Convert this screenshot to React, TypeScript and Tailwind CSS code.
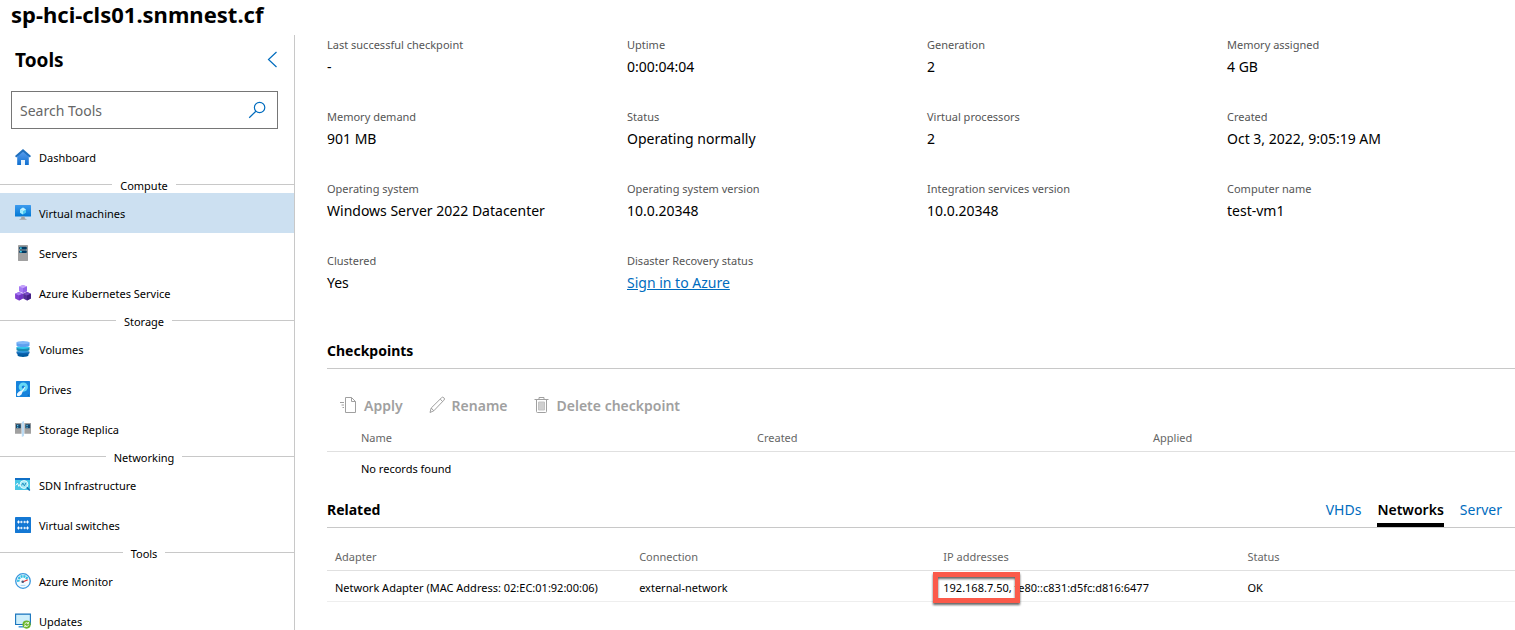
import type { ReactNode } from "react";

const icons: Record<string, ReactNode> = {
  dashboard: (
    <>
      <defs>
        <linearGradient id="home" x1="0" y1="0" x2="0" y2="1">
          <stop offset="0" stopColor="#5ea0ef" />
          <stop offset="1" stopColor="#0f6fd0" />
        </linearGradient>
      </defs>
      <path d="M2.2 6.5 8 1.5l5.8 5V16H9.900v-5H6.100v5H2.200z" fill="url(#home)" />
      <path d="M8 0 0 7l1.200 1.600L8 2.800l6.800 5.800L16 7z" fill="#1f6fbd" />
      <path d="M6.100 11h3.800v5H6.100z" fill="#e8f3fc" />
    </>
  ),
  vm: (
    <>
      <defs>
        <linearGradient id="screen" x1="0" y1="1" x2="0" y2="0">
          <stop offset="0" stopColor="#0078d4" />
          <stop offset="1" stopColor="#3e9bee" />
        </linearGradient>
      </defs>
      <rect y="0" width="16" height="11.6" rx=".5" fill="url(#screen)" />
      <path d="M8 2.600 11 4.400v3.400l-3 1.800-3-1.800V4.400z" fill="#50c8ee" />
      <path d="m8 2.600 3 1.800-3 1.700-3-1.700z" fill="#c3f1ff" />
      <path d="M5 4.400l3 1.700v3.500l-3-1.800z" fill="#9cebff" />
      <path d="M6.400 11.600h3.200l.3 1.800 1.700.8v.6H4.400v-.6l1.700-.8z" fill="#a3a3a3" />
    </>
  ),
  server: (
    <>
      <rect x="3" width="10" height="16" rx=".4" fill="#a0a0a0" />
      <rect x="4.200" y="1.800" width="7.600" height="2.600" rx="1" fill="#003a63" />
      <rect x="4.200" y="5.400" width="7.600" height="2.600" rx="1" fill="#003a63" />
      <circle cx="5.900" cy="3.100" r=".9" fill="#50e6ff" />
      <circle cx="5.900" cy="6.700" r=".9" fill="#50e6ff" />
    </>
  ),
  kubernetes: (
    <>
      <path d="m8 0 4 1.600v4.600L8 8 4 6.200V1.600z" fill="#a67af4" />
      <path d="m8 0 4 1.600L8 3.200 4 1.600z" fill="#c5a3fb" />
      <path d="M8 3.200V8l4-1.800V1.600z" fill="#9463e6" />
      <path d="m4 7 3.900 1.700v4.900L4 15.600.1 13.600V8.700z" fill="#7f3fd0" />
      <path d="m4 7 3.900 1.700L4 10.400.1 8.700z" fill="#a67af4" />
      <path d="M4 10.400v5.200l3.900-2V8.700z" fill="#7236c4" />
      <path d="m12 7 3.900 1.700v4.900l-3.900 2-3.900-2V8.700z" fill="#552f99" />
      <path d="m12 7 3.900 1.700-3.900 1.700-3.900-1.700z" fill="#7a4cc4" />
      <path d="M12 10.400v5.200l3.900-2V8.700z" fill="#421f83" />
    </>
  ),
  volumes: (
    <>
      <path d="M2.500 12.500h11v1.800c0 2.200-11 2.200-11 0z" fill="#005a9e" />
      <path d="M1.500 10.500h13v1.600c0 2-13 2-13 0z" fill="#0f62ae" />
      <path d="M1.500 6.300h13v2.400c0 2.200-13 2.200-13 0z" fill="#198ab3" />
      <ellipse cx="8" cy="6.500" rx="6.500" ry="1.500" fill="#32c8ec" />
      <path d="M1.500 1.600h13v2.800c0 2-13 2-13 0z" fill="#5ea0ef" />
      <ellipse cx="8" cy="1.700" rx="6.500" ry="1.600" fill="#83b9f9" />
      <ellipse cx="8" cy="10.900" rx="6" ry="1" fill="#2b96dc" />
    </>
  ),
  drives: (
    <>
      <rect x="1" width="14" height="16" rx=".5" fill="#1683dc" />
      <circle cx="8.300" cy="6.100" r="4.600" fill="#66d8f5" />
      <circle cx="8.300" cy="6.100" r="1.600" fill="#1683dc" />
      <path d="m2 12.700 2-2.300 3-.9L9.600 5.800l.7.6-2.600 4.200-1.200 2.800-2.400 1.800L2 14.800z" fill="#eef8ff" />
      <circle cx="13.300" cy="14.200" r=".6" fill="#005ba1" />
    </>
  ),
  replica: (
    <>
      <path d="M0 2h6.600v10.800H0zM9.400 2H16v10.800H9.400z" fill="#a0a0a0" />
      <path d="M1 3.200h4.800v4H1zM10.400 3.200h4.800v4h-4.800z" fill="#16466d" />
      <path d="M2 4h1.300v1H2zM2 5.800h1.300v1H2zM11.400 4h1.300v1h-1.300zM11.400 5.800h1.300v1h-1.300z" fill="#5cc7e8" />
      <path d="M6.800 1 9 0v15l-2.200 1z" fill="#bcdcf5" />
    </>
  ),
  sdn: (
    <>
      <path d="M0 1h15v12H0z" fill="#47c7e5" />
      <path d="M0 1h15v2H0z" fill="#0f6fc6" />
      <path d="M.8 8.300 2.500 6.200l1.300 3.200 1-1.900" stroke="#fff" strokeWidth=".9" fill="none" />
      <circle cx="9" cy="7.500" r="3.900" fill="#9be7f4" stroke="#e6fbff" />
      <path d="m6.500 8.400 1.400-2.300 1.500 2.700 1.600-3" stroke="#1683b8" strokeWidth=".9" fill="none" />
      <path d="m11.800 10.200 3 3.300" stroke="#1272b5" strokeWidth="1.6" />
    </>
  ),
  switches: (
    <>
      <rect width="16" height="16" rx=".4" fill="#1478d4" />
      <path d="M3.500 5h3.200M9.300 5h3.200M3.500 11h3.200M9.300 11h3.200" stroke="#fff" strokeWidth="1" />
      <path
        d="M2 5l2-1.900v3.800zM7.800 5 6.200 3.400v3.200zM8.200 5l1.600-1.600v3.200zM14 5l-2-1.900v3.800zM2 11l2-1.900v3.800zM7.800 11 6.200 9.400v3.200zM8.200 11l1.600-1.600v3.200zM14 11l-2-1.900v3.800z"
        fill="#fff"
      />
    </>
  ),
  monitor: (
    <>
      <circle cx="8" cy="8" r="7.300" fill="#f4fbff" stroke="#3a96dd" strokeWidth="1.3" />
      <path
        d="M3.400 8.800A4.700 4.700 0 0 1 12.200 5.800"
        fill="none"
        stroke="#32bfe4"
        strokeWidth="2.6"
        strokeDasharray="2.1 .7"
      />
      <path d="m7.600 9 5.200-2.200" stroke="#e62c2c" strokeWidth="1.2" />
      <circle cx="7.700" cy="8.800" r="1.300" fill="#44597a" />
      <path d="M5.600 12.400h4.800" stroke="#a8d6f5" />
    </>
  ),
  updates: (
    <>
      <path d="M.6 1.100h14.800v10.400H.6z" fill="#cdeefb" stroke="#1673bd" strokeWidth="1.1" />
      <path d="M3.600 14.400h5v-1.100h-5z" fill="#0078d4" />
      <circle cx="11.600" cy="11.600" r="4.100" fill="#6bb52c" />
      <path
        d="M9.600 11.500a2.100 2.100 0 0 1 3.600-1.200M13.600 11.700a2.100 2.100 0 0 1-3.600 1.200M13.500 9v1.600h-1.600M9.700 14.200v-1.600h1.600"
        fill="none"
        stroke="#fff"
        strokeWidth=".8"
      />
    </>
  ),
};

const groups: { title?: string; items: { label: string; icon: string }[] }[] = [
  { items: [{ label: "Dashboard", icon: "dashboard" }] },
  {
    title: "Compute",
    items: [
      { label: "Virtual machines", icon: "vm" },
      { label: "Servers", icon: "server" },
      { label: "Azure Kubernetes Service", icon: "kubernetes" },
    ],
  },
  {
    title: "Storage",
    items: [
      { label: "Volumes", icon: "volumes" },
      { label: "Drives", icon: "drives" },
      { label: "Storage Replica", icon: "replica" },
    ],
  },
  {
    title: "Networking",
    items: [
      { label: "SDN Infrastructure", icon: "sdn" },
      { label: "Virtual switches", icon: "switches" },
    ],
  },
  {
    title: "Tools",
    items: [
      { label: "Azure Monitor", icon: "monitor" },
      { label: "Updates", icon: "updates" },
    ],
  },
];

const properties: [string, string][] = [
  ["Last successful checkpoint", "-"],
  ["Uptime", "0:00:04:04"],
  ["Generation", "2"],
  ["Memory assigned", "4 GB"],
  ["Memory demand", "901 MB"],
  ["Status", "Operating normally"],
  ["Virtual processors", "2"],
  ["Created", "Oct 3, 2022, 9:05:19 AM"],
  ["Operating system", "Windows Server 2022 Datacenter"],
  ["Operating system version", "10.0.20348"],
  ["Integration services version", "10.0.20348"],
  ["Computer name", "test-vm1"],
  ["Clustered", "Yes"],
];

function Sidebar() {
  return (
    <aside className="flex w-[295px] shrink-0 flex-col overflow-hidden border-r border-[#c8c8c8]">
      <div className="flex h-[50px] shrink-0 items-center justify-between pr-4 pl-[15px]">
        <h2 className="text-[19px] font-bold">Tools</h2>
        <button type="button" aria-label="Collapse tools" className="text-[#006cbe]">
          <svg width="11" height="18" viewBox="0 0 11 18" fill="none" stroke="currentColor" strokeWidth="1.2">
            <path d="M9.500 1 1.500 8.500l8 7.500" />
          </svg>
        </button>
      </div>
      <div className="mt-1.5 mr-4 ml-[11px] flex h-[38px] shrink-0 items-center border border-[#767676] px-2">
        <input
          type="text"
          aria-label="Search Tools"
          placeholder="Search Tools"
          className="min-w-0 flex-1 text-[14px] outline-none placeholder:text-[#666]"
        />
        <button type="button" aria-label="Search" className="mr-0.5 text-[#006cbe]">
          <svg width="20" height="18" viewBox="0 0 20 18" fill="none" stroke="currentColor" strokeWidth="1.2">
            <circle cx="12.600" cy="6.500" r="5.200" />
            <path d="m8.900 10.200-6.700 6.500" />
          </svg>
        </button>
      </div>
      <nav className="mt-2 text-[11px] leading-4">
        {groups.map((group, index) => (
          <div key={index}>
            {group.title && (
              <div className="-ml-1.5 flex h-4 items-center gap-2 pb-0.5 before:h-px before:flex-1 before:bg-[#c8c8c8] after:h-px after:flex-1 after:bg-[#c8c8c8]">
                <span className="pt-1">{group.title}</span>
              </div>
            )}
            {group.items.map((item) => (
              <a
                key={item.label}
                href="#"
                className={
                  item.icon === "vm"
                    ? "flex h-10 items-center gap-2 bg-[#cce0f1] pl-[15px]"
                    : "flex h-10 items-center gap-2 pl-[15px]"
                }
              >
                <svg width="16" height="16" viewBox="0 0 16 16" aria-hidden="true">
                  {icons[item.icon]}
                </svg>
                <span className="pt-0.5">{item.label}</span>
              </a>
            ))}
          </div>
        ))}
      </nav>
    </aside>
  );
}

function Property({ label, children }: { label: string; children: ReactNode }) {
  return (
    <div className="h-[72px]">
      <dt className="text-[11px] leading-4 text-[#555]">{label}</dt>
      <dd className="mt-1 text-[14px] leading-5">{children}</dd>
    </div>
  );
}

function Command({ label, children }: { label: string; children: ReactNode }) {
  return (
    <button type="button" disabled className="flex items-center gap-[5px] text-[14px] font-semibold text-[#a0a0a0]">
      <svg width="20" height="18" viewBox="0 0 20 18" fill="none" stroke="currentColor" aria-hidden="true">
        {children}
      </svg>
      {label}
    </button>
  );
}

export default function App() {
  return (
    <div className="flex h-screen flex-col overflow-hidden bg-white font-['Noto_Sans','Open_Sans',sans-serif] text-black">
      <h1 className="h-[35px] shrink-0 pl-[11px] text-[22px] leading-7 font-bold">sp-hci-cls01.snmnest.cf</h1>
      <div className="flex min-h-0 flex-1">
        <Sidebar />
        <main className="min-w-0 flex-1 pt-0.5 pl-8">
          <dl className="grid grid-cols-4 gap-x-3">
            {properties.map(([label, value]) => (
              <Property key={label} label={label}>
                {value}
              </Property>
            ))}
            <Property label="Disaster Recovery status">
              <a href="#" className="text-[#006cbe] underline">
                Sign in to Azure
              </a>
            </Property>
          </dl>

          <section>
            <h2 className="mt-4 h-[28px] border-b border-[#c8c8c8] text-[14px] leading-5 font-bold">Checkpoints</h2>
            <div className="mt-6 flex h-6 items-center gap-6 pl-3">
              <Command label="Apply">
                <path d="M6.500 1.500h6l4 4v11h-10zM12.500 1.500v4h4M1 6.500h4M2.500 9h2.500M3.500 11.500h1.500" />
              </Command>
              <Command label="Rename">
                <path d="m3 16.500 1.200-4.500L14.500 1.800a1.600 1.600 0 0 1 2.400 0 1.600 1.600 0 0 1 0 2.400L6.800 14.800zM4.200 12l2.600 2.800M13.200 3.100l2.600 2.600" />
              </Command>
              <Command label="Delete checkpoint">
                <path d="M4.500 3.500v12q0 1 1 1h8q1 0 1-1v-12M2.500 3.500h14M7 3.500v-2h5v2" />
                <path d="M6.500 6h6v8h-6z" fill="#d0d0d0" stroke="#c4c4c4" />
              </Command>
            </div>
            <table className="mt-2 w-full table-fixed text-left text-[11px] leading-4">
              <thead className="text-[#666]">
                <tr className="h-[26px] border-b border-[#e0e0e0]">
                  <th className="pl-[34px] font-normal">Name</th>
                  <th className="pl-[34px] font-normal">Created</th>
                  <th className="pl-[34px] font-normal">Applied</th>
                </tr>
              </thead>
              <tbody>
                <tr className="h-[35px]">
                  <td colSpan={3} className="pl-[34px]">
                    No records found
                  </td>
                </tr>
              </tbody>
            </table>
          </section>

          <section>
            <div className="mt-2 flex h-[34px] items-start justify-between border-b border-[#c8c8c8] pt-1.5 pr-[13px]">
              <h2 className="text-[14px] leading-5 font-bold">Related</h2>
              <div role="tablist" className="flex gap-4 text-[14px] leading-5 text-[#006cbe]">
                <button type="button" role="tab" aria-selected="false" className="h-[27px] pb-[7px]">
                  VHDs
                </button>
                <button
                  type="button"
                  role="tab"
                  aria-selected="true"
                  className="h-[27px] border-b-4 border-black pb-[3px] font-semibold text-black"
                >
                  Networks
                </button>
                <button type="button" role="tab" aria-selected="false" className="h-[27px] pb-[7px]">
                  Server
                </button>
              </div>
            </div>
            <table className="mt-4 w-full table-fixed text-left text-[11px] leading-4">
              <thead className="text-[#666]">
                <tr className="h-[26px] border-b border-[#e0e0e0]">
                  <th className="w-[25.6%] pl-2 font-normal">Adapter</th>
                  <th className="w-[25.6%] pl-2 font-normal">Connection</th>
                  <th className="w-[25.6%] pl-2 font-normal">IP addresses</th>
                  <th className="pl-2 font-normal">Status</th>
                </tr>
              </thead>
              <tbody>
                <tr className="h-[31px] border-b border-[#eee]">
                  <td className="pt-1 pl-2">Network Adapter (MAC Address: 02:EC:01:92:00:06)</td>
                  <td className="pt-1 pl-2">external-network</td>
                  <td className="pt-1 pl-2">
                    <span className="relative">
                      192.168.7.50,
                      <span className="absolute -top-2 -right-2 -bottom-2 -left-2.5 border-[5px] border-[#fb5a4a] drop-shadow-[0_2px_1px_rgba(0,0,0,0.6)]" />
                    </span>{" "}
                    fe80::c831:d5fc:d816:6477
                  </td>
                  <td className="pt-1 pl-2">OK</td>
                </tr>
              </tbody>
            </table>
          </section>
        </main>
      </div>
    </div>
  );
}
